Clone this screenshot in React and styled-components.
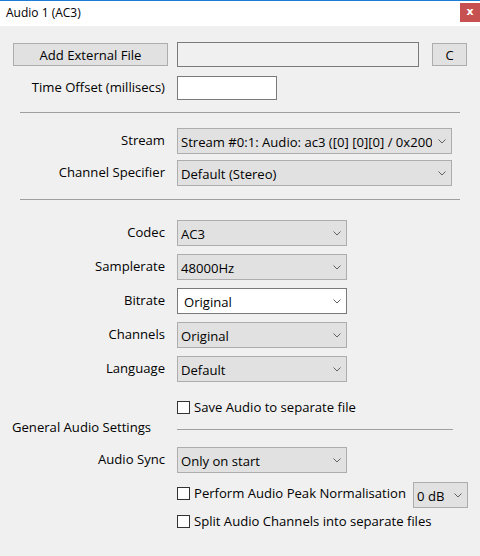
import React from "react";
import styled, { createGlobalStyle } from "styled-components";

const GlobalStyle = createGlobalStyle`
  *, *::before, *::after { box-sizing: border-box; }
  html, body { margin: 0; padding: 0; }
  body {
    font-family: "Open Sans", "Noto Sans", sans-serif;
    font-size: 13.1px;
    color: #000;
    background: #f0f0f0;
  }
`;

const Window = styled.div`
  width: 480px;
  height: 556px;
  background: #f0f0f0;
  overflow: hidden;
  display: flex;
  flex-direction: column;
`;

const TitleBar = styled.div`
  flex: none;
  height: 26px;
  background: #fff;
  border-top: 1px solid #1b7ed3;
  display: flex;
  justify-content: space-between;
  align-items: flex-start;
`;

const Title = styled.span`
  font-size: 12px;
  line-height: 24px;
  padding-left: 6px;
`;

const CloseButton = styled.div`
  margin-top: 2px;
  width: 20px;
  height: 19px;
  background: #c75050;
  color: #fff;
  font-family: "DejaVu Sans", sans-serif;
  font-weight: bold;
  font-size: 11px;
  display: flex;
  align-items: center;
  justify-content: center;
  padding-bottom: 2px;
`;

const Body = styled.div`
  padding-top: 16px;
  display: flex;
  flex-direction: column;
`;

const TopRow = styled.div`
  display: flex;
  align-items: center;
  padding-left: 13px;
  height: 25px;
`;

const Button = styled.div`
  width: ${(p) => p.$w}px;
  height: 23px;
  margin-left: ${(p) => p.$ml || 0}px;
  background: #e1e1e1;
  border: 1px solid #adadad;
  display: flex;
  align-items: center;
  justify-content: center;
`;

const TextBox = styled.div`
  width: ${(p) => p.$w}px;
  height: ${(p) => p.$h || 24}px;
  margin-left: ${(p) => p.$ml || 0}px;
  background: ${(p) => (p.$disabled ? "#f0f0f0" : "#fff")};
  border: 1px solid #7a7a7a;
`;

const Section = styled.div`
  margin-top: ${(p) => p.$mt}px;
  display: grid;
  grid-template-columns: 165px 1fr;
  column-gap: 12px;
  row-gap: ${(p) => p.$gap || 8}px;
  align-items: center;
`;

const Label = styled.span`
  text-align: right;
  white-space: nowrap;
  padding-bottom: 2px;
`;

const Separator = styled.div`
  margin: ${(p) => p.$mt}px 20px 0;
  height: 1px;
  background: #a0a0a0;
`;

const Combo = styled.div`
  width: ${(p) => p.$w}px;
  height: 26px;
  display: flex;
  align-items: center;
  background: ${(p) => (p.$editable ? "#fff" : "#e1e1e1")};
  border: 1px solid ${(p) => (p.$editable ? "#7a7a7a" : "#adadad")};
  padding: 0 5px 0 ${(p) => (p.$editable ? 6 : 3)}px;
  margin-left: ${(p) => (p.$push ? "auto" : "0")};
`;

const ComboText = styled.span`
  flex: 1;
  overflow: hidden;
  white-space: nowrap;
  margin-right: 6px;
  padding-top: 2px;
`;

const Indent = styled.div`
  margin-top: ${(p) => p.$mt}px;
  padding: 0 12px 0 177px;
  display: flex;
  align-items: flex-start;
  height: ${(p) => p.$h || 18}px;
`;

const CheckLabel = styled.label`
  display: flex;
  align-items: center;
  gap: 4px;
  height: 18px;
  margin-top: ${(p) => p.$mt || 0}px;
  white-space: nowrap;
`;

const Box = styled.span`
  flex: none;
  width: 13px;
  height: 13px;
  background: #fff;
  border: 1px solid #333;
`;

const GroupHeader = styled.div`
  margin-top: 3px;
  height: 18px;
  display: flex;
  align-items: center;
  padding: 0 27px 0 12px;
`;

const GroupTitle = styled.span`
  width: 165px;
  padding-bottom: 2px;
`;

const GroupLine = styled.div`
  flex: 1;
  height: 1px;
  margin-top: 2px;
  background: #a0a0a0;
`;

const Chevron = () => (
  <svg width="8" height="5" viewBox="0 0 8 5">
    <polyline points="0.5,0.5 4,4 7.5,0.5" fill="none" stroke="#606060" strokeWidth="1" />
  </svg>
);

const Select = ({ w, editable, push, children }) => (
  <Combo $w={w} $editable={editable} $push={push}>
    <ComboText>{children}</ComboText>
    <Chevron />
  </Combo>
);

const Check = ({ mt, children }) => (
  <CheckLabel $mt={mt}>
    <Box />
    {children}
  </CheckLabel>
);

const App = () => {
  return (
    <>
      <GlobalStyle />
      <Window>
        <TitleBar>
          <Title>Audio 1 (AC3)</Title>
          <CloseButton>x</CloseButton>
        </TitleBar>
        <Body>
          <TopRow>
            <Button $w={155}>Add External File</Button>
            <TextBox $w={242} $h={25} $ml={9} $disabled />
            <Button $w={35} $ml={13}>C</Button>
          </TopRow>

          <Section $mt={9}>
            <Label>Time Offset (millisecs)</Label>
            <TextBox $w={100} />
          </Section>

          <Separator $mt={12} />

          <Section $mt={15} $gap={6}>
            <Label>Stream</Label>
            <Select w={275}>
              Stream #0:1: Audio: ac3 ([0] [0][0] / 0x2000), 48000 Hz, stereo, fltp, 192 kb/s
            </Select>
            <Label>Channel Specifier</Label>
            <Select w={275}>Default (Stereo)</Select>
          </Section>

          <Separator $mt={13} />

          <Section $mt={20}>
            <Label>Codec</Label>
            <Select w={170}>AC3</Select>
            <Label>Samplerate</Label>
            <Select w={170}>48000Hz</Select>
            <Label>Bitrate</Label>
            <Select w={170} editable>Original</Select>
            <Label>Channels</Label>
            <Select w={170}>Original</Select>
            <Label>Language</Label>
            <Select w={170}>Default</Select>
          </Section>

          <Indent $mt={16}>
            <Check>Save Audio to separate file</Check>
          </Indent>

          <GroupHeader>
            <GroupTitle>General Audio Settings</GroupTitle>
            <GroupLine />
          </GroupHeader>

          <Section $mt={10}>
            <Label>Audio Sync</Label>
            <Select w={170}>Only on start</Select>
          </Section>

          <Indent $mt={9} $h={26}>
            <Check mt={2}>Perform Audio Peak Normalisation</Check>
            <Select w={55} push>0 dB</Select>
          </Indent>

          <Indent $mt={4}>
            <Check>Split Audio Channels into separate files</Check>
          </Indent>
        </Body>
      </Window>
    </>
  );
};

export default App;
